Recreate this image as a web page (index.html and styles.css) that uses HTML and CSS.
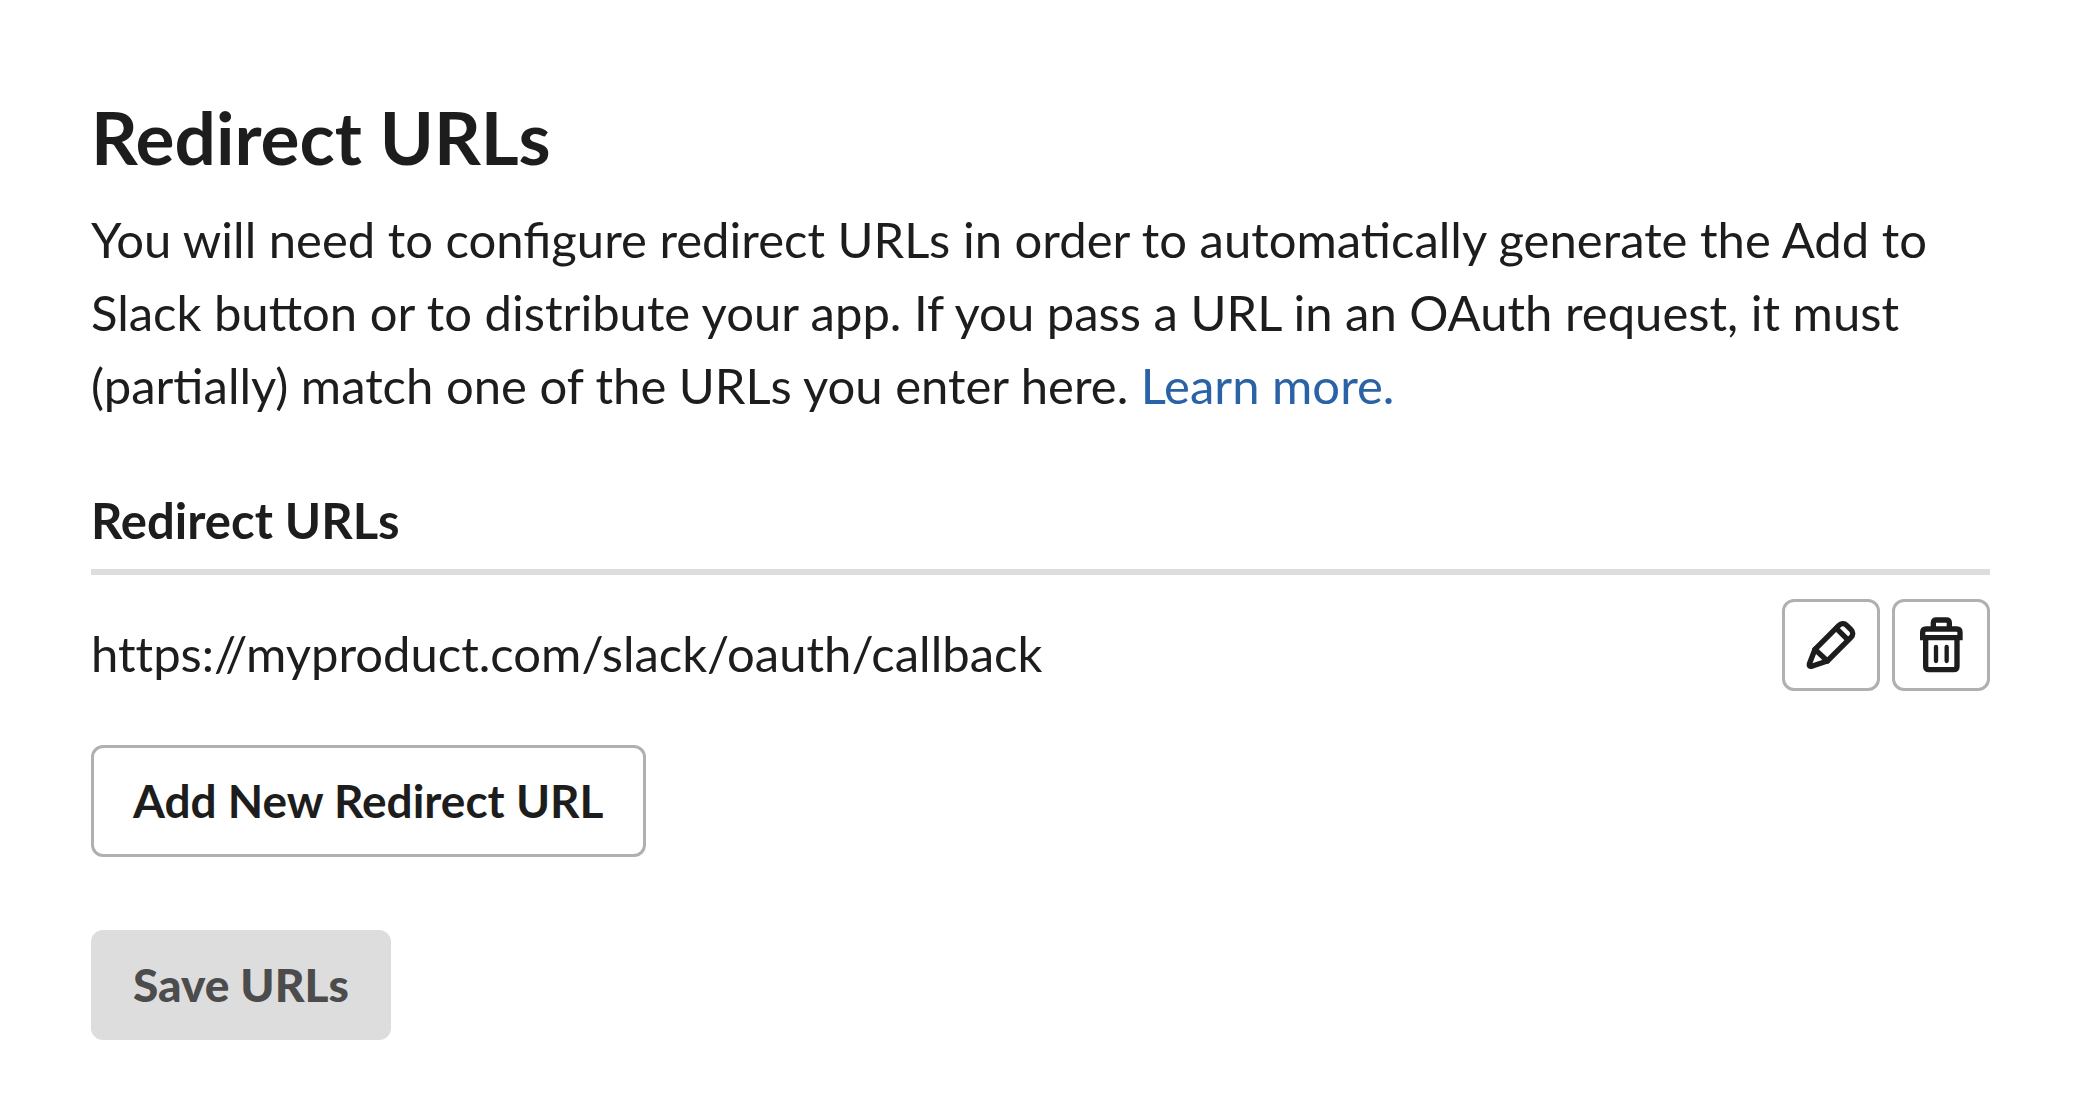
FILE: index.html
```html
<!DOCTYPE html>
<html lang="en">
<head>
<meta charset="utf-8">
<meta name="viewport" content="width=device-width, initial-scale=1">
<title>Redirect URLs</title>
<link rel="stylesheet" href="styles.css">
</head>
<body>
<main class="page">
  <h1 class="title">Redirect URLs</h1>
  <p class="intro">You will need to configure redirect URLs in order to automatically generate the Add to Slack button or to distribute your app. If you pass a URL in an OAuth request, it must (partially) match one of the URLs you enter here. <a class="link" href="#">Learn more.</a></p>
  <h2 class="subtitle">Redirect URLs</h2>
  <div class="url-row">
    <span class="url">https://myproduct.com/slack/oauth/callback</span>
    <div class="actions">
      <button class="icon-button" type="button" aria-label="Edit">
        <svg class="icon" viewBox="0 0 168 168" aria-hidden="true">
          <path d="M36 97 L107 26 C114 19 124 18 131 25 L144 38 C151 45 151 54 144 61 L73 132 L26 148 C20 149 18 146 19 141 Z"/>
          <path d="M36 97 L73 132 M100 34 L134 68"/>
        </svg>
      </button>
      <button class="icon-button" type="button" aria-label="Delete">
        <svg class="icon" viewBox="0 0 168 168" aria-hidden="true">
          <path class="square" d="M61 36 V18 Q61 9 70 9 H100 Q109 9 109 18 V36"/>
          <path class="square" d="M29 62 V46 Q29 36 39 36 H131 Q141 36 141 46 V62 Z"/>
          <path class="square" d="M38 62 V148 Q38 158 48 158 H122 Q132 158 132 148 V62"/>
          <path class="slot" d="M69 90 V132 M101 90 V132"/>
        </svg>
      </button>
    </div>
  </div>
  <button class="button" type="button">Add New Redirect URL</button>
  <button class="button save" type="button" disabled>Save URLs</button>
</main>
</body>
</html>
```
FILE: styles.css
```css
* {
  box-sizing: border-box;
}

body {
  margin: 0;
  background: #fff;
  color: #1d1d1d;
  font: 400 49px/73px Lato, sans-serif;
}

.page {
  display: flex;
  flex-direction: column;
  align-items: flex-start;
  padding: 93px 86px 64px 91px;
}

.title {
  margin: 0 0 22px;
  font-size: 73px;
  font-weight: 700;
  line-height: 88px;
}

.intro {
  margin: 0 0 62px;
}

.link {
  color: #2a62a6;
  text-decoration: none;
}

.subtitle {
  width: 100%;
  margin: 0 0 24px;
  padding-bottom: 12px;
  border-bottom: 6px solid #ddd;
  font-size: 49px;
  font-weight: 700;
}

.url-row {
  display: flex;
  justify-content: space-between;
  width: 100%;
  margin-bottom: 54px;
}

.url {
  padding-top: 18px;
  font-variant-ligatures: none;
}

.actions {
  display: flex;
  align-items: flex-start;
  gap: 12px;
}

.icon-button {
  display: flex;
  align-items: center;
  justify-content: center;
  width: 98px;
  height: 92px;
  padding: 0;
  border: 3px solid #b0b0b0;
  border-radius: 12px;
  background: #fff;
}

.icon {
  width: 56px;
  height: 56px;
  fill: none;
  stroke: #1d1d1d;
  stroke-width: 16;
  stroke-linecap: round;
  stroke-linejoin: round;
}

.square {
  stroke-linecap: butt;
  stroke-linejoin: miter;
}

.slot {
  stroke-width: 13;
}

.button {
  height: 112px;
  margin-bottom: 73px;
  padding: 0 39px;
  border: 3px solid #b0b0b0;
  border-radius: 12px;
  background: #fff;
  color: #1d1d1d;
  font: 700 46px/70px Lato, sans-serif;
}

.save {
  height: 110px;
  margin: 0;
  border-color: #ddd;
  background: #ddd;
  color: #4c4c4c;
  font-weight: 900;
}
```
